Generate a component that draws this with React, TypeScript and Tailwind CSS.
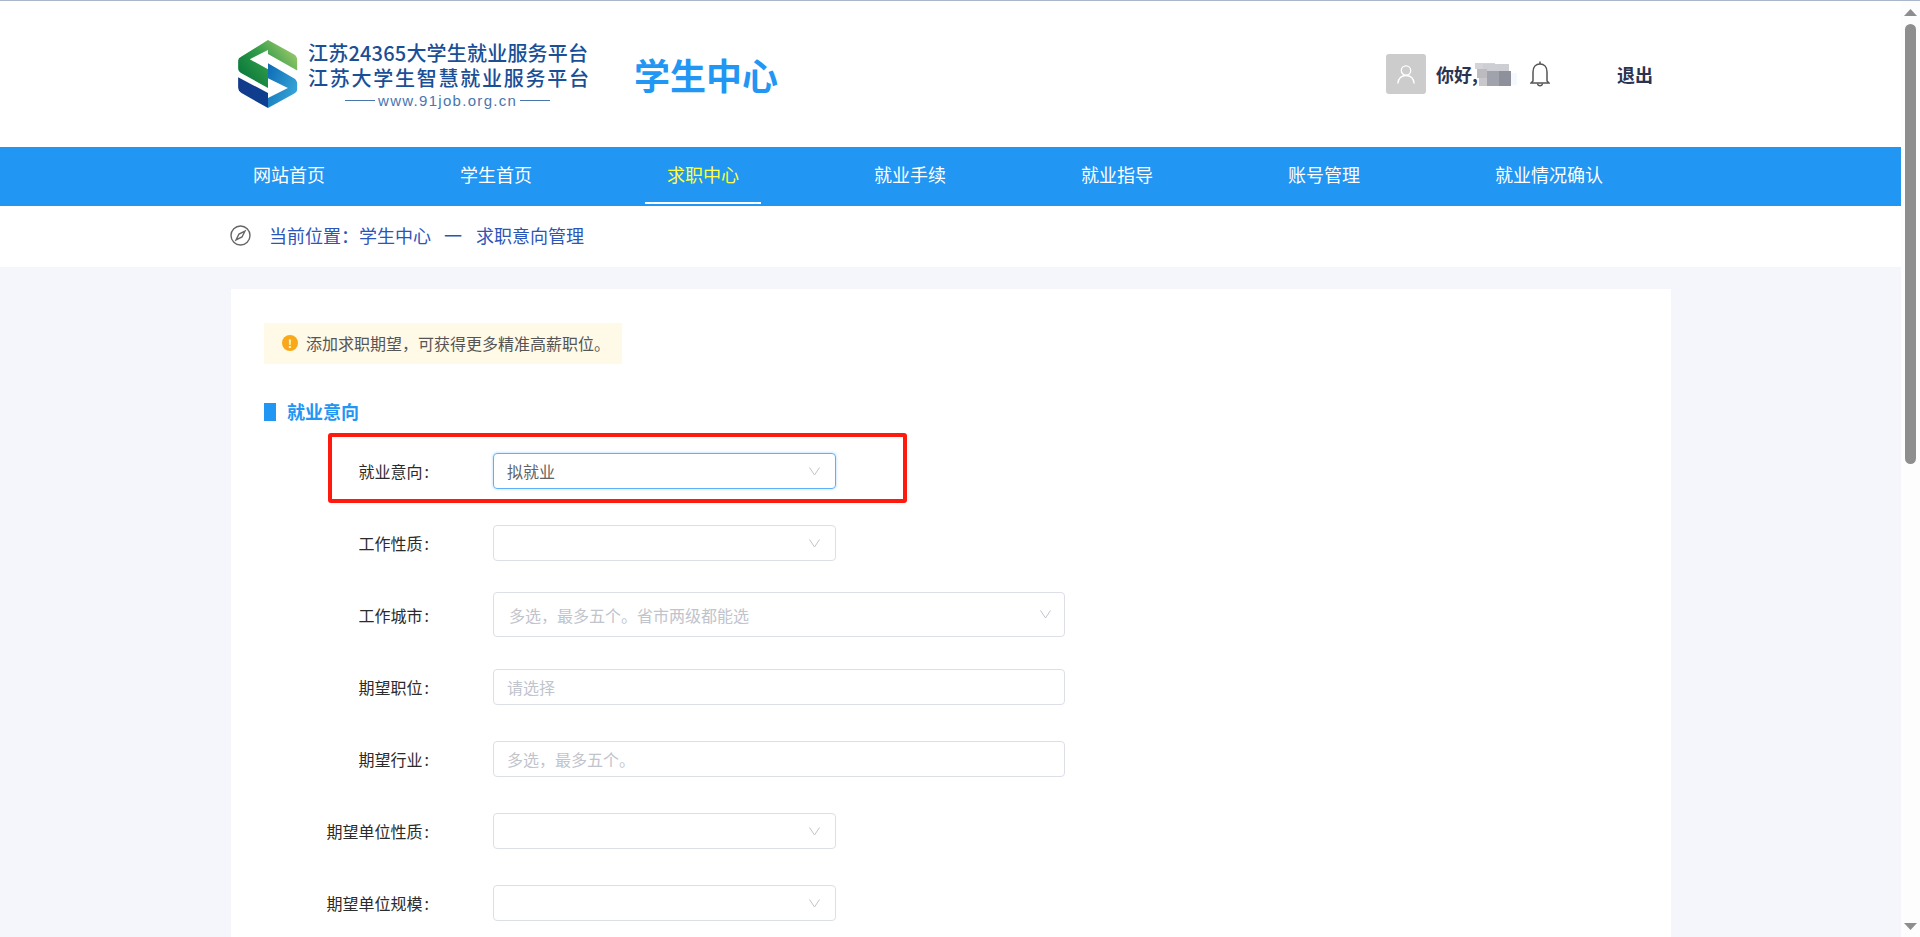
const cjk = "font-['Noto_Sans_CJK_SC','Microsoft_YaHei',sans-serif]";

const navItems = ["网站首页", "学生首页", "求职中心", "就业手续", "就业指导", "账号管理", "就业情况确认"];

function Chevron() {
  return (
    <svg className="h-[9px] w-[13px] shrink-0" viewBox="0 0 13 9" fill="none" stroke="#c0c4cc" strokeWidth="1">
      <path d="M1.5 0.5 L6.5 8 L11.5 0.5" />
    </svg>
  );
}

function Logo() {
  return (
    <svg className="h-[68px] w-[60px] shrink-0" viewBox="40 30 180 205">
      <defs>
        <linearGradient id="lg-green" x1="0.1" y1="0.8" x2="1" y2="0.2">
          <stop offset="0" stopColor="#0b7a3c" />
          <stop offset="0.45" stopColor="#2f9a48" />
          <stop offset="1" stopColor="#a3cc6e" />
        </linearGradient>
        <linearGradient id="lg-blue" x1="0" y1="0.1" x2="1" y2="0.7">
          <stop offset="0" stopColor="#0e6db6" />
          <stop offset="1" stopColor="#38a6d8" />
        </linearGradient>
        <linearGradient id="lg-navy" x1="0" y1="0" x2="1" y2="1">
          <stop offset="0" stopColor="#143a8c" />
          <stop offset="1" stopColor="#0d3f8f" />
        </linearGradient>
      </defs>
      <path
        d="M130 30 L208 73 Q218 79 218 90 L218 122 L130 72 L130 60 L75 88 L130 118 L130 175 L50 130 Q40 124 40 115 L40 92 Q40 85 50 80 Z"
        fill="url(#lg-green)"
      />
      <path
        d="M130 100 L208 145 Q218 151 218 162 L218 178 Q218 187 208 192 L130 235 L130 205 L190 175 L130 145 Z"
        fill="url(#lg-blue)"
      />
      <path d="M40 142 L130 190 L130 235 L50 190 Q40 184 40 172 Z" fill="url(#lg-navy)" />
    </svg>
  );
}

// the user's name is pixelated out in the picture
function Mosaic() {
  return (
    <svg className="h-[23px] w-[46px] shrink-0" viewBox="0 0 46 23">
      <rect x="0" y="0" width="20" height="6" fill="#d4d4d8" />
      <rect x="8" y="1" width="26" height="7" fill="#cdced4" />
      <rect x="2" y="6" width="10" height="9" fill="#bcbcc0" />
      <rect x="12" y="8" width="12" height="15" fill="#a0a2ac" />
      <rect x="24" y="8" width="12" height="15" fill="#8e909c" />
      <rect x="4" y="15" width="8" height="8" fill="#c8c8cc" />
      <rect x="36" y="10" width="6" height="12" fill="#f5f9fe" />
    </svg>
  );
}

function Row({ label, children }: { label: string; children: React.ReactNode }) {
  return (
    <div className="flex items-center">
      <label className="w-[165px] shrink-0 text-right text-[16px] text-[#2b2b2b]">
        {label}
        <span className="ml-[2px]">:</span>
      </label>
      <div className="ml-[64px]">{children}</div>
    </div>
  );
}

function SelectBox({ value, focused }: { value?: string; focused?: boolean }) {
  return (
    <div
      className={
        focused
          ? "flex h-[36px] w-[343px] items-center justify-between rounded-[4px] border border-[#5fb0fb] pl-[13px] pr-[14px] shadow-[0_0_3px_#a9d5fb]"
          : "flex h-[36px] w-[343px] items-center justify-between rounded-[4px] border border-[#dcdfe6] pl-[13px] pr-[14px]"
      }
    >
      <span className="text-[16px] text-[#606266]">{value}</span>
      <Chevron />
    </div>
  );
}

function TextBox({ placeholder }: { placeholder: string }) {
  return (
    <input
      readOnly
      placeholder={placeholder}
      className="block h-[36px] w-[572px] rounded-[4px] border border-[#dcdfe6] bg-white px-[13px] text-[16px] outline-none placeholder:text-[#c0c4cc]"
    />
  );
}

export default function App() {
  return (
    <div className={`relative flex h-[937px] w-full overflow-hidden bg-[#f4f6fb] ${cjk}`}>
      <div className="min-w-0 flex-1">
        {/* Header */}
        <header className="flex h-[147px] items-center border-t border-[#a9b8c8] bg-white pl-[238px] pr-[248px]">
          <Logo />
          <div className="ml-[10px] flex w-[280px] flex-col font-medium text-[#1a4f97]">
            <div className="whitespace-nowrap text-[20px] leading-[25px] tracking-[0.2px]">江苏24365大学生就业服务平台</div>
            <div className="whitespace-nowrap text-[20px] leading-[25px] tracking-[1.75px]">江苏大学生智慧就业服务平台</div>
            <div className="mt-[3px] flex items-center gap-[3px] font-normal text-[#4a76ae]">
              <span className="ml-[37px] h-px w-[30px] bg-[#4a76ae]" />
              <span className="whitespace-nowrap font-['Liberation_Sans',sans-serif] text-[15px] leading-[16px] tracking-[1.3px]">www.91job.org.cn</span>
              <span className="h-px w-[30px] bg-[#4a76ae]" />
            </div>
          </div>
          <div className="ml-[46px] whitespace-nowrap text-[36px] font-bold text-[#2196f3]">学生中心</div>
          <div className="ml-auto flex items-center">
            <div className="flex h-[40px] w-[40px] items-center justify-center rounded-[3px] bg-[#cccccc]">
              <svg className="h-[20px] w-[20px]" viewBox="0 0 20 20" fill="none" stroke="#fff" strokeWidth="1.3">
                <circle cx="10" cy="6.5" r="4.7" />
                <path d="M1.8 19.5 C2.5 14 6 11.5 10 11.5 C14 11.5 17.5 14 18.2 19.5" />
              </svg>
            </div>
            <span className="ml-[10px] w-[39px] whitespace-nowrap text-[18px] font-bold text-[#2a3350]">你好,</span>
            <Mosaic />
            <svg className="ml-[9px] h-[26px] w-[20px] shrink-0" viewBox="0 0 20 26" fill="none" stroke="#555" strokeWidth="1.5">
              <path d="M10 0.5 V3" />
              <path d="M3 20 V11 C3 6 6 3 10 3 C14 3 17 6 17 11 V20 L19 22 H1 Z" />
              <path d="M7.5 22.5 C8 25.5 12 25.5 12.5 22.5" />
            </svg>
            <span className="ml-[67px] whitespace-nowrap text-[18px] font-bold text-[#2a3350]">退出</span>
          </div>
        </header>

        {/* Nav */}
        <nav className="flex h-[59px] gap-[91px] bg-[#2196f3] pl-[231px]">
          {navItems.map((item) => {
            const active = item === "求职中心";
            return (
              <a
                key={item}
                className={
                  active
                    ? "mb-[2px] flex items-center whitespace-nowrap border-b-2 border-white px-[22px] text-[18px] text-[#ffff3d]"
                    : "mb-[2px] flex items-center whitespace-nowrap border-b-2 border-transparent px-[22px] text-[18px] text-white"
                }
              >
                {item}
              </a>
            );
          })}
        </nav>

        {/* Breadcrumb */}
        <div className="flex h-[61px] items-center bg-white pb-[2px] pl-[230px] text-[18px] text-[#2d55b8]">
          <svg className="h-[21px] w-[21px] shrink-0" viewBox="0 0 21 21" fill="none" stroke="#666" strokeWidth="1.4">
            <circle cx="10.5" cy="10.5" r="9.5" />
            <path d="M15 6 L12 12 L6 15 L9 9 Z" />
          </svg>
          <span className="ml-[18px]">当前位置：学生中心</span>
          <span className="ml-[13px]">一</span>
          <span className="ml-[14px]">求职意向管理</span>
        </div>

        {/* Card */}
        <main className="relative ml-[231px] mt-[22px] h-[700px] w-[1440px] bg-white pl-[33px] pt-[34px]">
          <div className="flex h-[41px] w-[358px] items-center bg-[#fff9e8] pb-[1px] pl-[18px]">
            <span className="flex h-[16px] w-[16px] items-center justify-center rounded-full bg-[#f9a81a] text-[11px] font-bold leading-none text-white">!</span>
            <span className="ml-[8px] whitespace-nowrap text-[16px] text-[#555]">添加求职期望，可获得更多精准高薪职位。</span>
          </div>

          <div className="mt-[34px] flex items-center">
            <span className="h-[18px] w-[12px] bg-[#2196f3]" />
            <span className="ml-[11px] text-[18px] font-bold text-[#2196f3]">就业意向</span>
          </div>

          <div className="mt-[28px] flex flex-col gap-[36px]">
            <Row label="就业意向">
              <SelectBox value="拟就业" focused />
            </Row>
            <Row label="工作性质">
              <SelectBox />
            </Row>
            <div className="-mb-[4px] -mt-[5px]">
              <Row label="工作城市">
                <div className="flex h-[45px] w-[572px] items-center justify-between rounded-[4px] border border-[#dcdfe6] pl-[15px] pr-[12px]">
                  <span className="text-[16px] text-[#c0c4cc]">多选，最多五个。省市两级都能选</span>
                  <Chevron />
                </div>
              </Row>
            </div>
            <Row label="期望职位">
              <TextBox placeholder="请选择" />
            </Row>
            <Row label="期望行业">
              <TextBox placeholder="多选，最多五个。" />
            </Row>
            <Row label="期望单位性质">
              <SelectBox />
            </Row>
            <Row label="期望单位规模">
              <SelectBox />
            </Row>
          </div>

          {/* red annotation round the first row */}
          <div className="absolute left-[97px] top-[144px] h-[70px] w-[579px] rounded-[3px] border-4 border-[#ff1a0e]" />
        </main>
      </div>

      {/* Scrollbar */}
      <aside className="flex w-[19px] shrink-0 flex-col items-center border-t border-[#a9b8c8] bg-[#fdfdfd]">
        <svg className="mt-[8px] h-[7px] w-[13px] shrink-0" viewBox="0 0 13 7">
          <path d="M6.5 0 L13 7 L0 7 Z" fill="#8e8e8e" />
        </svg>
        <div className="mt-[8px] h-[440px] w-[11px] shrink-0 rounded-full bg-[#8e8e8e]" />
        <svg className="mt-auto mb-[7px] h-[7px] w-[13px] shrink-0" viewBox="0 0 13 7">
          <path d="M0 0 L13 0 L6.5 7 Z" fill="#8e8e8e" />
        </svg>
      </aside>
    </div>
  );
}
